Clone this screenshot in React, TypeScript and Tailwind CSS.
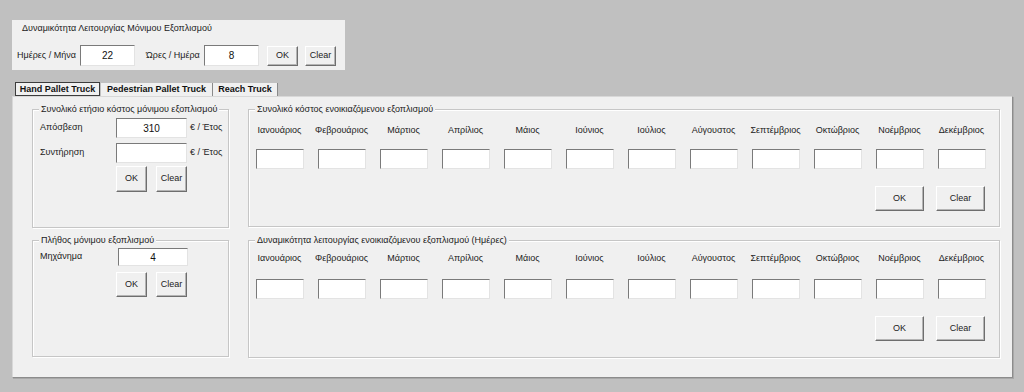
import React from 'react';

const months = [
  'Ιανουάριος', 'Φεβρουάριος', 'Μάρτιος', 'Απρίλιος', 'Μάιος', 'Ιούνιος',
  'Ιούλιος', 'Αύγουστος', 'Σεπτέμβριος', 'Οκτώβριος', 'Νοέμβριος', 'Δεκέμβριος',
];

function Field({ value = '', className = '' }: { value?: string; className?: string }) {
  return (
    <div
      className={`bg-white border border-t-[#7a7a7a] border-l-[#7a7a7a] border-r-[#e3e3e3] border-b-[#e3e3e3] flex items-center justify-center text-[10px] text-[#111] ${className}`}
    >
      {value}
    </div>
  );
}

function Btn({ label, className = '' }: { label: string; className?: string }) {
  return (
    <div
      className={`bg-[#f0f0f0] border border-t-white border-l-white border-r-[#6e6e6e] border-b-[#6e6e6e] shadow-[inset_-1px_-1px_0_#b4b4b4] flex items-center justify-center text-[9px] text-[#222] ${className}`}
    >
      {label}
    </div>
  );
}

function Group({ title, className = '', children }: { title: string; className?: string; children: React.ReactNode }) {
  return (
    <div className={`relative border border-[#c6c6c6] shadow-[inset_1px_1px_0_#ffffff,1px_1px_0_#ffffff] ${className}`}>
      <span className="absolute -top-[7px] left-[6px] bg-[#f0f0f0] px-[2px] leading-[12px] whitespace-nowrap text-[#222]">
        {title}
      </span>
      {children}
    </div>
  );
}

function MonthGroup({ title, padTop, inputGap, btnGap }: { title: string; padTop: string; inputGap: string; btnGap: string }) {
  return (
    <Group title={title} className={`w-[752px] h-[118px] pl-[7px] pr-[14px] ${padTop}`}>
      <div className="flex gap-[15px]">
        {months.map((m) => (
          <div key={m} className="w-[47px] flex flex-col items-center">
            <span className="leading-[11px] h-[11px] whitespace-nowrap text-[#222]">{m}</span>
            <Field className={`w-[48px] h-[20px] ${inputGap}`} />
          </div>
        ))}
      </div>
      <div className={`flex justify-end gap-[12px] ${btnGap}`}>
        <Btn label="OK" className="w-[49px] h-[25px]" />
        <Btn label="Clear" className="w-[49px] h-[25px]" />
      </div>
    </Group>
  );
}

export default function App() {
  return (
    <div className="w-[1024px] h-[392px] bg-[#c0c0c0] pt-5 pl-3 font-['Liberation_Sans',Arial,sans-serif] text-[9px] text-[#222] overflow-hidden">
      {/* top panel */}
      <div className="w-[333px] h-[50px] bg-[#f0f0f0] pl-[10px] pt-[2px]">
        <div className="leading-[12px]">Δυναμικότητα Λειτουργίας Μόνιμου Εξοπλισμού</div>
        <div className="flex items-center mt-[11px] -ml-[5px]">
          <span className="w-[63px]">Ημέρες / Μήνα</span>
          <Field value="22" className="w-[55px] h-[21px]" />
          <span className="ml-[11px] w-[58px]">Ώρες / Ημέρα</span>
          <Field value="8" className="w-[55px] h-[21px]" />
          <Btn label="OK" className="ml-[8px] w-[31px] h-[20px]" />
          <Btn label="Clear" className="ml-[7px] w-[31px] h-[20px]" />
        </div>
      </div>

      {/* tabs */}
      <div className="flex items-end w-[1001px] h-[13px] mt-[13px] font-bold text-[9px] text-[#111]">
        <div className="ml-[3px] w-[85px] h-[14px] border border-[#3c3c3c] bg-[#f0f0f0] flex items-center justify-center leading-none">
          Hand Pallet Truck
        </div>
        <div className="ml-[1px] w-[112px] h-[13px] bg-[#f0f0f0] border-r border-[#8a8a8a] flex items-center justify-center leading-none">
          Pedestrian Pallet Truck
        </div>
        <div className="w-[65px] h-[13px] bg-[#f0f0f0] border-r border-[#8a8a8a] flex items-center justify-center leading-none">
          Reach Truck
        </div>
      </div>

      {/* main panel */}
      <div className="w-[1001px] h-[282px] bg-[#f0f0f0] border border-t-[#d8d8d8] border-l-[#d8d8d8] border-r-[#8c8c8c] border-b-[#8c8c8c] shadow-[1px_1px_0_#a8a8a8] flex gap-[19px] pt-[12px] pl-[19px]">
        <div className="flex flex-col gap-[12px]">
          <Group title="Συνολικό ετήσιο κόστος μόνιμου εξοπλισμού" className="w-[197px] h-[119px] pl-[7px] pt-[8px]">
            <div className="flex items-center">
              <span className="w-[76px]">Απόσβεση</span>
              <Field value="310" className="w-[71px] h-[20px]" />
              <span className="ml-[3px]">€ / Έτος</span>
            </div>
            <div className="flex items-center mt-[5px]">
              <span className="w-[76px]">Συντήρηση</span>
              <Field className="w-[71px] h-[20px]" />
              <span className="ml-[3px]">€ / Έτος</span>
            </div>
            <div className="flex gap-[9px] mt-[3px] ml-[76px]">
              <Btn label="OK" className="w-[31px] h-[26px]" />
              <Btn label="Clear" className="w-[31px] h-[26px]" />
            </div>
          </Group>
          <Group title="Πλήθος μόνιμου εξοπλισμού" className="w-[197px] h-[117px] pl-[7px] pt-[7px]">
            <div className="flex items-center">
              <span className="w-[78px]">Μηχάνημα</span>
              <Field value="4" className="w-[70px] h-[18px]" />
            </div>
            <div className="flex gap-[9px] mt-[6px] ml-[76px]">
              <Btn label="OK" className="w-[31px] h-[25px]" />
              <Btn label="Clear" className="w-[31px] h-[25px]" />
            </div>
          </Group>
        </div>

        <div className="flex flex-col gap-[13px]">
          <MonthGroup title="Συνολικό κόστος ενοικιαζόμενου εξοπλισμού" padTop="pt-[15px]" inputGap="mt-[13px]" btnGap="mt-[17px]" />
          <MonthGroup title="Δυναμικότητα λειτουργίας ενοικιαζόμενου εξοπλισμού (Ημέρες)" padTop="pt-[12px]" inputGap="mt-[15px]" btnGap="mt-[17px]" />
        </div>
      </div>
    </div>
  );
}
